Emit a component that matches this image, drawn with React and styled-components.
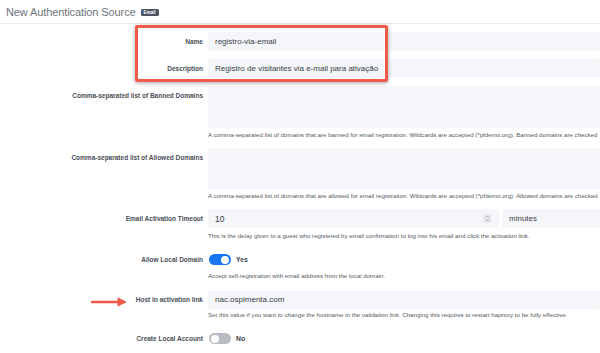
import React from 'react'
import styled, { createGlobalStyle } from 'styled-components'

const Global = createGlobalStyle`
  html, body { margin: 0; padding: 0; background: #fff; }
  body {
    width: 600px;
    height: 353px;
    overflow: hidden;
    font-family: "Liberation Sans", Arial, sans-serif;
    color: #3d434a;
  }
`

const Page = styled.div`
  position: relative;
  width: 600px;
  height: 353px;
  overflow: hidden;
`

const Header = styled.div`
  height: 23px;
  border-bottom: 1px solid #e9ebee;
  display: flex;
  align-items: center;
  gap: 5px;
  padding-left: 6px;
`

const Title = styled.h1`
  margin: 0;
  font-size: 11px;
  font-weight: 400;
  color: #6f747a;
  letter-spacing: -0.1px;
`

const Badge = styled.span`
  background: #4b5563;
  color: #fff;
  font-size: 4.5px;
  font-weight: 700;
  line-height: 7px;
  padding: 0 3px;
  border-radius: 1.5px;
  margin-top: 2px;
`

const Form = styled.div`
  padding-top: 8px;
`

const Group = styled.div`
  display: grid;
  grid-template-columns: 203px minmax(0, 1fr);
  column-gap: 5px;
  margin-bottom: ${p => p.$mb || 8}px;
`

const Label = styled.label`
  text-align: right;
  font-size: 6.5px;
  font-weight: 700;
  line-height: 19px;
  color: #4a4f57;
  white-space: nowrap;
`

const Control = styled.div`
  min-width: 0;
`

const Input = styled.div`
  height: ${p => p.$h || 19}px;
  background: #f4f6f9;
  border-radius: 2px;
  padding: 0 7px;
  display: flex;
  align-items: ${p => (p.$h ? 'flex-start' : 'center')};
  font-size: ${p => p.$fs || 8}px;
  color: #3a3f45;
  white-space: nowrap;
  position: relative;
  flex: 1;
`

const Help = styled.div`
  margin-top: ${p => p.$mt ?? 3}px;
  font-size: 6.15px;
  line-height: 8px;
  color: #555a60;
  white-space: nowrap;
`

const Row = styled.div`
  display: flex;
  align-items: center;
  gap: 3px;
  height: 19px;
`

const Select = styled(Input)`
  flex: 0 0 84px;
  padding-left: 7px;
  font-size: 8px;
`

const Spinner = styled.span`
  position: absolute;
  right: 8px;
  top: 5px;
  width: 8px;
  height: 9px;
  background: #e6e8eb;
  border-radius: 1.5px;
  display: flex;
  align-items: center;
  justify-content: center;
`

const Switch = styled.span`
  width: 22px;
  height: 11px;
  border-radius: 6px;
  background: ${p => (p.$on ? '#1a73f0' : '#b9bdc3')};
  position: relative;
  margin-left: 1px;
  &::after {
    content: '';
    position: absolute;
    top: 1.5px;
    left: ${p => (p.$on ? '12px' : '1.5px')};
    width: 8px;
    height: 8px;
    border-radius: 50%;
    background: #fff;
  }
`

const SwitchText = styled.span`
  font-size: 6.8px;
  font-weight: 700;
  color: #3d434a;
  margin-left: 2px;
`

const Highlight = styled.div`
  position: absolute;
  left: 135px;
  top: 25px;
  width: 247px;
  height: 51px;
  border: 3px solid #f05a4b;
  border-radius: 2px;
  box-shadow: 0 1px 4px rgba(0, 0, 0, 0.35);
  pointer-events: none;
`

const Arrow = styled.svg`
  position: absolute;
  left: 91px;
  top: 297px;
`

const Field = ({ label, children, mb }) => (
  <Group $mb={mb}>
    <Label>{label}</Label>
    <Control>{children}</Control>
  </Group>
)

export default function App() {
  return (
    <Page>
      <Global />
      <Header>
        <Title>New Authentication Source</Title>
        <Badge>Email</Badge>
      </Header>
      <Form>
        <Field label="Name">
          <Input>registro-via-email</Input>
        </Field>
        <Field label="Description">
          <Input>Registro de visitantes via e-mail para ativação</Input>
        </Field>
        <Field label="Comma-separated list of Banned Domains" mb={9}>
          <Input $h={42} />
          <Help>
            A comma-separated list of domains that are banned for email registration. Wildcards are accepted (*pfdemo.org). Banned domains are checked
          </Help>
        </Field>
        <Field label="Comma-separated list of Allowed Domains" mb={9}>
          <Input $h={42} />
          <Help $mt={2}>
            A comma-separated list of domains that are allowed for email registration. Wildcards are accepted (*pfdemo.org). Allowed domains are checked
          </Help>
        </Field>
        <Field label="Email Activation Timeout" mb={10}>
          <Row>
            <Input $fs={8.5}>
              10
              <Spinner>
                <svg width="5" height="7" viewBox="0 0 5 7">
                  <path d="M1 2.5 L2.5 1 L4 2.5 M1 4.5 L2.5 6 L4 4.5" fill="none" stroke="#8a8f96" strokeWidth="0.7" />
                </svg>
              </Spinner>
            </Input>
            <Select>minutes</Select>
          </Row>
          <Help $mt={4}>
            This is the delay given to a guest who registered by email confirmation to log into his email and click the activation link.
          </Help>
        </Field>
        <Field label="Allow Local Domain" mb={10}>
          <Row>
            <Switch $on />
            <SwitchText>Yes</SwitchText>
          </Row>
          <Help>Accept self-registration with email address from the local domain.</Help>
        </Field>
        <Field label="Host in activation link" mb={10}>
          <Input>nac.ospimenta.com</Input>
          <Help $mt={2}>
            Set this value if you want to change the hostname in the validation link. Changing this requires to restart haproxy to be fully effective.
          </Help>
        </Field>
        <Field label="Create Local Account">
          <Row>
            <Switch />
            <SwitchText>No</SwitchText>
          </Row>
        </Field>
      </Form>
      <Highlight />
      <Arrow width="38" height="10" viewBox="0 0 38 10">
        <path d="M1 5 H30" stroke="#ef5a48" strokeWidth="2.6" strokeLinecap="round" />
        <path d="M27 1 L35 5 L27 9 Z" fill="#ef5a48" stroke="#ef5a48" strokeWidth="1" strokeLinejoin="round" />
      </Arrow>
    </Page>
  )
}
